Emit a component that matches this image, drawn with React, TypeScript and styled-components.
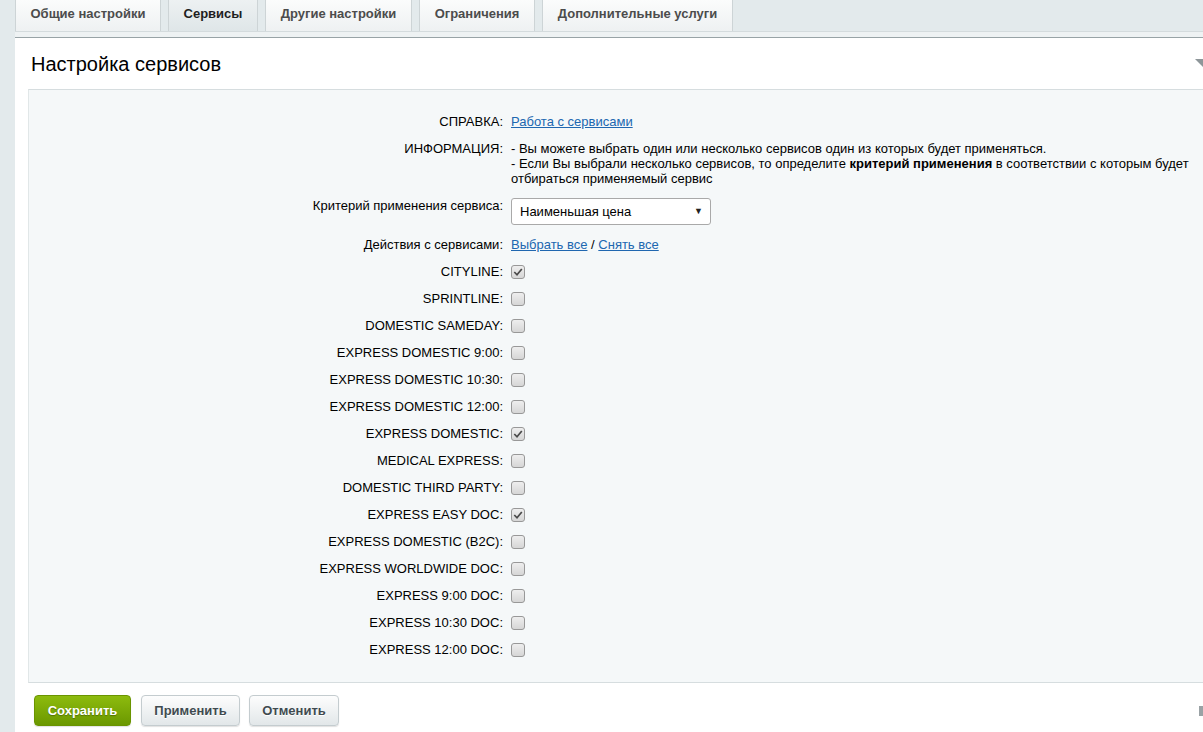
import React from 'react';
import styled, { createGlobalStyle } from 'styled-components';

interface Service {
  name: string;
  checked?: boolean;
}

interface TabItem {
  title: string;
  width: number;
}

const tabs: TabItem[] = [
  { title: 'Общие настройки', width: 146 },
  { title: 'Сервисы', width: 90 },
  { title: 'Другие настройки', width: 147 },
  { title: 'Ограничения', width: 116 },
  { title: 'Дополнительные услуги', width: 191 },
];

const services: Service[] = [
  { name: 'CITYLINE', checked: true },
  { name: 'SPRINTLINE' },
  { name: 'DOMESTIC SAMEDAY' },
  { name: 'EXPRESS DOMESTIC 9:00' },
  { name: 'EXPRESS DOMESTIC 10:30' },
  { name: 'EXPRESS DOMESTIC 12:00' },
  { name: 'EXPRESS DOMESTIC', checked: true },
  { name: 'MEDICAL EXPRESS' },
  { name: 'DOMESTIC THIRD PARTY' },
  { name: 'EXPRESS EASY DOC', checked: true },
  { name: 'EXPRESS DOMESTIC (B2C)' },
  { name: 'EXPRESS WORLDWIDE DOC' },
  { name: 'EXPRESS 9:00 DOC' },
  { name: 'EXPRESS 10:30 DOC' },
  { name: 'EXPRESS 12:00 DOC' },
];

const Checkbox: React.FC<{ checked?: boolean }> = ({ checked }) => (
  <Box>
    {checked && (
      <svg width="10" height="10" viewBox="0 0 10 10">
        <path d="M1.3 5 L4 7.8 L8.8 2" fill="none" stroke="#4a4a4a" strokeWidth="1.7" />
      </svg>
    )}
  </Box>
);

const App: React.FC = () => {
  return (
    <>
      <GlobalStyle />
      <Page>
        <TabBar>
          {tabs.map((t, i) => (
            <Tab key={t.title} active={i === 1} width={t.width}>{t.title}</Tab>
          ))}
        </TabBar>
        <Strip />
        <Panel>
          <Header>
            <Title>Настройка сервисов</Title>
            <Corner width="8" height="8" viewBox="0 0 8 8">
              <path d="M0 0 H8 V8 Z" fill="#8e9699" />
            </Corner>
          </Header>
          <Inner>
            <Row>
              <Label>СПРАВКА:</Label>
              <Value><Link href="#">Работа с сервисами</Link></Value>
            </Row>
            <Row>
              <Label>ИНФОРМАЦИЯ:</Label>
              <Value>
                - Вы можете выбрать один или несколько сервисов один из которых будет применяться.
                <br />
                - Если Вы выбрали несколько сервисов, то определите <b>критерий применения</b> в соответствии с которым будет
                <br />
                отбираться применяемый сервис
              </Value>
            </Row>
            <Row>
              <Label>Критерий применения сервиса:</Label>
              <Value>
                <Select>
                  Наименьшая цена
                  <Arrow>▼</Arrow>
                </Select>
              </Value>
            </Row>
            <Row>
              <Label>Действия с сервисами:</Label>
              <Value>
                <Link href="#">Выбрать все</Link> / <Link href="#">Снять все</Link>
              </Value>
            </Row>
            {services.map((s) => (
              <CheckRow key={s.name}>
                <Label>{s.name}:</Label>
                <Value>
                  <Checkbox checked={s.checked} />
                </Value>
              </CheckRow>
            ))}
          </Inner>
          <Buttons>
            <Button primary width={97}>Сохранить</Button>
            <Button width={99}>Применить</Button>
            <Button width={90}>Отменить</Button>
            <Spacer />
            <Handle />
          </Buttons>
        </Panel>
      </Page>
    </>
  );
};

const GlobalStyle = createGlobalStyle`
  html, body {
    margin: 0;
    padding: 0;
    overflow: hidden;
  }
  body {
    background: #e3eaec;
    font-family: "Liberation Sans", Arial, sans-serif;
    font-size: 13px;
    color: #000;
  }
`;

const Page = styled.div`
  padding-left: 15px;
  height: 732px;
  display: flex;
  flex-direction: column;
`;

const TabBar = styled.div`
  display: flex;
  gap: 7px;
  height: 31px;
`;

const Tab = styled.div<{ active?: boolean; width: number }>`
  width: ${(p) => p.width}px;
  height: 31px;
  box-sizing: border-box;
  padding-top: 6px;
  text-align: center;
  font-size: 13px;
  font-weight: bold;
  line-height: 15px;
  color: ${(p) => (p.active ? '#1e1e1e' : '#4c4c4c')};
  background: ${(p) =>
    p.active
      ? 'linear-gradient(#edf1f2, #dfe6e8)'
      : 'linear-gradient(#fbfcfc, #eef1f2)'};
  border: 1px solid #cdd4d6;
  border-top: none;
  border-bottom: none;
  white-space: nowrap;
`;

const Strip = styled.div`
  height: 5px;
  background: #eef2f3;
  border-top: 1px solid #d4dbdd;
  border-bottom: 1px solid #98a3a6;
`;

const Panel = styled.div`
  flex: 1;
  background: #fff;
  display: flex;
  flex-direction: column;
`;

const Header = styled.div`
  height: 51px;
  display: flex;
  align-items: center;
  justify-content: space-between;
  padding-left: 16px;
`;

const Title = styled.div`
  font-size: 20px;
  color: #000;
  margin-top: 1px;
`;

const Corner = styled.svg`
  align-self: flex-start;
  margin-top: 21px;
`;

const Inner = styled.div`
  margin-left: 13px;
  background: #f5f8f9;
  border-top: 1px solid #d6dddf;
  border-left: 1px solid #e1e7e8;
  border-bottom: 1px solid #d6dddf;
  padding: 18px 0 19px;
`;

const Row = styled.div`
  display: grid;
  grid-template-columns: 474px 1fr;
  column-gap: 8px;
  padding: 6px 0;
  line-height: 15px;
`;

const CheckRow = styled(Row)`
  align-items: center;
  padding: 0;
  height: 27px;
`;

const Label = styled.div`
  text-align: right;
  color: #000;
`;

const Value = styled.div`
  color: #000;
  b {
    font-weight: bold;
  }
`;

const Link = styled.a`
  color: #2067b0;
  text-decoration: underline;
`;

const Select = styled.div`
  position: relative;
  width: 200px;
  height: 27px;
  box-sizing: border-box;
  border: 1px solid #a9a9a9;
  border-radius: 3px;
  background: #fff;
  padding-left: 8px;
  line-height: 25px;
  font-size: 13px;
`;

const Arrow = styled.span`
  position: absolute;
  right: 7px;
  top: 0;
  font-size: 9px;
  color: #222;
`;

const Box = styled.span`
  display: flex;
  align-items: center;
  justify-content: center;
  width: 14px;
  height: 14px;
  box-sizing: border-box;
  border: 1px solid #989898;
  border-radius: 3px;
  background: linear-gradient(#eeeeee, #d6d6d6);
  margin-top: 1px;
`;

const Buttons = styled.div`
  display: flex;
  align-items: flex-start;
  gap: 9px;
  padding: 12px 0 0 19px;
`;

const Button = styled.button<{ primary?: boolean; width: number }>`
  width: ${(p) => p.width}px;
  height: 31px;
  padding: 0;
  margin-right: ${(p) => (p.primary ? 1 : 0)}px;
  font-family: "Liberation Sans", Arial, sans-serif;
  font-size: 13px;
  font-weight: bold;
  border-radius: 4px;
  cursor: pointer;
  color: ${(p) => (p.primary ? '#fff' : '#3f4b50')};
  text-shadow: ${(p) => (p.primary ? '0 1px 1px rgba(0,0,0,.3)' : '0 1px #fff')};
  background: ${(p) =>
    p.primary ? 'linear-gradient(#8dbb0e, #6b9800)' : 'linear-gradient(#fdfdfd, #e2e7e9)'};
  border: 1px solid ${(p) => (p.primary ? '#6a9400' : '#c4cccf')};
  box-shadow: 0 1px 1px rgba(0, 0, 0, 0.12);
`;

const Spacer = styled.div`
  flex: 1;
`;

const Handle = styled.div`
  width: 4px;
  height: 10px;
  margin-top: 11px;
  background: #9aa2a5;
`;

export default App;
